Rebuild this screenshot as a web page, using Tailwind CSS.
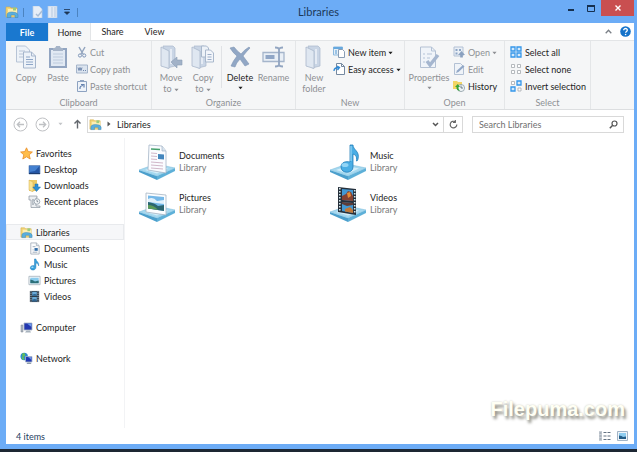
<!DOCTYPE html>
<html lang="en">
<head>
  <meta charset="UTF-8">
  <meta name="viewport" content="width=device-width, initial-scale=1">
  <title>Libraries</title>
  <script src="https://cdn.jsdelivr.net/npm/@tailwindcss/browser@4"></script>
</head>
<body class="min-h-screen flex flex-col bg-[#6cacf6] border-b-[3px] border-[#1d2733] font-[Lato,'Open_Sans',sans-serif] text-[9px] leading-[11px] text-[#1e1e1e]">

  <!-- shared icons -->
  <svg class="hidden">
    <symbol id="libraries" viewBox="0 0 14 14">
      <path d="M1 2h4l1 1h6v9H1z" fill="#f3d578" stroke="#d3ac48" stroke-width=".6"/>
      <path d="M3 4h9v4H3z" fill="#fbeeb4"/><path d="M8 2.500h3v3H8z" fill="#9ccb7c"/>
      <path d="M2 12.500V10q0-3 5-3t6 2.500v3h-3V10H6v2.500z" fill="#59aede" stroke="#3a86b8" stroke-width=".5"/>
    </symbol>
    <symbol id="document" viewBox="0 0 14 14">
      <path d="M3 1h6l3 3v9H3z" fill="#fbfcfd" stroke="#98a3af" stroke-width=".8"/>
      <path d="M9 1v3h3" fill="#dde4ea" stroke="#98a3af" stroke-width=".7"/>
      <path d="M5 5h3M5 11h5M5 8.500h1" stroke="#8696a8" stroke-width=".8"/><path d="M7 6.500h3.500v3H7z" fill="#356fa9"/>
    </symbol>
    <symbol id="music" viewBox="0 0 14 14">
      <path d="M7 1h1.500c0 2.500 4 3.500 3 7.500-.3-2-1.500-2.800-3-3V10c0 4-6 3.800-6 .7C2.500 8.500 5 7.700 7 8.500z" fill="#38a1dd" stroke="#1d78b5" stroke-width=".5"/>
      <ellipse cx="4.700" cy="10" rx="1.300" ry=".8" fill="#a4dcf7"/>
    </symbol>
    <symbol id="picture" viewBox="0 0 14 14">
      <path d="M1 2.500h12v9H1z" fill="#f5f8fa" stroke="#9eabb6" stroke-width=".8"/>
      <path d="M2.500 4h9v6h-9z" fill="#8acbed"/><path d="M2.500 6q3 .5 5 2l4-1v3h-9z" fill="#2b6f78"/>
    </symbol>
    <symbol id="video" viewBox="0 0 14 14">
      <path d="M2 1h10v12H2z" fill="#2d3b49"/><path d="M4.500 2h5v4.300h-5zM4.500 7.500h5V12h-5z" fill="#69a9d6"/>
      <path d="M4.500 5q3-1.500 5 0v1.300h-5zM4.500 10.500q3-1.500 5 0V12h-5z" fill="#31648f"/>
      <path d="M3.200 1.500v12M10.800 1.500v12" stroke="#d7dfe6" stroke-dasharray="1 1"/>
    </symbol>
    <symbol id="tray" viewBox="0 0 36 36">
      <path d="M0 26l18 6v4L0 28z" fill="#4b9fcc"/><path d="M18 32l18-8v3l-18 9z" fill="#5eb0d8"/>
      <path d="M0 26l17-6 19 4-18 8z" fill="#a5d8ef" stroke="#74b8da" stroke-width=".5"/>
      <path d="M6 26l11-4 12 2.500-11 5z" fill="#d3eefa"/>
    </symbol>
    <symbol id="folder" viewBox="0 0 24 24">
      <path d="M6 1h10l2 2v18l-8 2z" fill="#c9d5e5" stroke="#a9b8cc" stroke-width=".7"/>
      <path d="M4 2l8 4v17.500L4 21z" fill="#dfe7f1" stroke="#a9b8cc" stroke-width=".8"/>
      <path d="M14 4v15" stroke="#eef2f8" stroke-width="1.500"/>
    </symbol>
    <symbol id="down" viewBox="0 0 6 4"><path d="M.5.500h5L3 3.500z" fill="currentColor"/></symbol>
  </svg>

  <header class="h-[23px] grid grid-cols-[1fr_auto_1fr] items-start">
    <div class="h-full flex items-center pl-[5px] pt-px">
      <svg class="size-[14px]"><use href="#libraries"/></svg>
      <span class="w-px h-[9px] bg-[#4b83c0] ml-1"></span>
      <button aria-label="Properties" class="ml-[7px]"><svg class="w-3 h-3" viewBox="0 0 12 12"><path d="M2 0h6l3 3v9H2z" fill="#e7eef7" stroke="#b8cce3" stroke-width=".7"/><path d="M5 8l2 2 4-5" fill="none" stroke="#a8bdd6" stroke-width="1.500"/></svg></button>
      <button aria-label="New folder" class="ml-1"><svg class="w-3 h-3" viewBox="0 0 12 12"><path d="M1 0h9v12H1z" fill="#e2eaf5" stroke="#b8cce3" stroke-width=".7"/><path d="M5 1v10M8 1v10" stroke="#b7c9df"/></svg></button>
      <button aria-label="Customize Quick Access Toolbar" class="ml-1"><svg class="w-2 h-2" viewBox="0 0 8 8"><path d="M1 1.500h6M1.500 4h5L4 6.500z" stroke="#1d3450" fill="#1d3450" stroke-width=".8"/></svg></button>
      <span class="w-px h-[9px] bg-[#4b83c0] ml-[6px]"></span>
    </div>
    <h1 class="text-[11px] leading-[23px] text-[#1c3858]">Libraries</h1>
    <div class="flex justify-end pr-[3px] text-[#16304f]">
      <button aria-label="Minimize" class="w-5 h-[15px] flex justify-center items-center"><svg class="w-[6px] h-[6px]" viewBox="0 0 6 6"><path d="M0 4h6v2H0z" fill="currentColor"/></svg></button>
      <button aria-label="Maximize" class="w-5 h-[15px] flex justify-center items-center pt-px"><svg class="w-2 h-[7px]" viewBox="0 0 8 7"><path d="M.5 1h7v5.500h-7z" fill="none" stroke="currentColor"/><path d="M0 0h8v2H0z" fill="currentColor"/></svg></button>
      <button aria-label="Close" class="w-[33px] h-4 bg-[#c94f50] flex justify-center items-center"><svg class="size-[6px]" viewBox="0 0 6 6"><path d="M.5.500l5 5M5.500.500l-5 5" stroke="#fff" stroke-width="1.400"/></svg></button>
    </div>
  </header>

  <div class="flex-1 flex flex-col mr-[3px] ml-[6px] mb-[5px] bg-white relative">
    <nav class="flex h-[18px] bg-white border-b border-[#e3e5e7] shrink-0">
      <button class="w-[42px] bg-[#1a78cf] text-white font-bold -mb-px">File</button>
      <button class="w-[43px] bg-[#f5f6f7] border-x border-[#e3e5e7] -mb-px">Home</button>
      <button class="w-[43px]">Share</button>
      <button class="w-[41px]">View</button>
      <span class="flex-1"></span>
      <button aria-label="Minimize the Ribbon" class="px-1"><svg class="w-[7px] h-[5px]" viewBox="0 0 7 5"><path d="M.7 4.200L3.500 1.200l2.800 3" fill="none" stroke="#7b8087" stroke-width="1.300"/></svg></button>
      <button aria-label="Help" class="pl-1 pr-[3px]"><svg class="size-[11px]" viewBox="0 0 11 11"><circle cx="5.500" cy="5.500" r="5.300" fill="#1673ca"/><path d="M3.700 4.300C3.700 1.800 7.500 2 7.300 4.200c-.1 1.300-1.700 1.200-1.700 2.600" fill="none" stroke="#fff" stroke-width="1.300"/><circle cx="5.600" cy="8.500" r=".8" fill="#fff"/></svg></button>
    </nav>

    <!-- ribbon -->
    <div class="flex h-[69px] shrink-0 bg-[#f5f6f7] border-b border-[#dcdee0] text-[#8e9094]">
      <section class="w-[146px] shrink-0 border-r border-[#e4e6e8] flex flex-col">
        <div class="flex flex-1 pl-1 pt-[3px]">
          <button class="w-8 flex flex-col items-center gap-[3px] pt-px">
            <svg class="size-6" viewBox="0 0 24 24"><path d="M2.500 1h9l4 4v12h-13z" fill="#edf2f8" stroke="#b7c4d6"/><path d="M5 6h6M5 9h5M5 12h5" stroke="#b7c4d6"/><path d="M9.500 7h8l4 4v12h-12z" fill="#edf2f8" stroke="#a6b6cc"/><path d="M17.500 7v4h4" fill="none" stroke="#a6b6cc"/><path d="M12 12h4M12 14.500h7M12 17h7M12 19.500h7" stroke="#8ea6c7"/></svg>
            Copy
          </button>
          <button class="w-8 flex flex-col items-center gap-[3px] pt-px">
            <svg class="size-6" viewBox="0 0 24 24"><path d="M3 3h18v20H3z" fill="#92a5c1"/><path d="M5 5h14v16H5z" fill="#e1e9f3"/><path d="M7 3q3 0 3-2h4q0 2 3 2v3H7z" fill="#a6b4c8"/><path d="M7 9h10M7 12h10M7 15h10M7 18h10" stroke="#bdcbdd"/></svg>
            Paste
          </button>
          <div class="flex flex-col gap-px pl-[2px]">
            <button class="h-4 flex items-center gap-[2px]"><svg class="size-3" viewBox="0 0 12 12"><path d="M3 1l4 7M9 1L5 8" stroke="#93a5bf" stroke-width="1.500"/><circle cx="4" cy="9.500" r="1.600" fill="none" stroke="#7e96b9"/><circle cx="8.200" cy="9.500" r="1.600" fill="none" stroke="#7e96b9"/></svg>Cut</button>
            <button class="h-4 flex items-center gap-[2px]"><svg class="size-3" viewBox="0 0 12 12"><path d="M.5 2h11v8H.5z" fill="#dbe4ef" stroke="#a4b4ca"/><path d="M2 4.500l1 3 1-3 1 3 1-3M7 7.500h1M9 7.500h1" fill="none" stroke="#6e86ac"/></svg>Copy path</button>
            <button class="h-4 flex items-center gap-[2px]"><svg class="size-3" viewBox="0 0 12 12"><path d="M1.500 1.500h9v10h-9z" fill="#eef3f9" stroke="#8da2c1"/><path d="M4 0h4v2H4z" fill="#8da2c1"/><path d="M4 9q-.5-3 3-3.500M5 4.500h3v3" fill="none" stroke="#6481ae" stroke-width="1.200"/></svg>Paste shortcut</button>
          </div>
        </div>
        <h2 class="h-3 text-center">Clipboard</h2>
      </section>

      <section class="w-[144px] shrink-0 border-r border-[#e4e6e8] flex flex-col">
        <div class="flex flex-1 pl-[3px] pt-[3px]">
          <button class="w-8 flex flex-col items-center gap-[3px] pt-px">
            <svg class="size-6" viewBox="0 0 24 24"><use href="#folder" x="-2"/><path d="M12 17l6-5v3h5v5h-5v3z" fill="#a2b2c8" stroke="#8c9eb7" stroke-width=".6"/></svg>
            <span>Move<br>to <svg class="inline w-[5px] h-1"><use href="#down"/></svg></span>
          </button>
          <button class="w-8 flex flex-col items-center gap-[3px] pt-px">
            <svg class="size-6" viewBox="0 0 24 24"><use href="#folder" x="-3"/><path d="M10.500 1h5l2 2v9h-7z" fill="#edf2f8" stroke="#a9b8cc"/><path d="M14.500 5h5l3 3v9h-8z" fill="#f2f5fa" stroke="#a9b8cc"/><path d="M16.500 9.500h4M16.500 12h4M16.500 14.500h4" stroke="#9caec8"/></svg>
            <span>Copy<br>to <svg class="inline w-[5px] h-1"><use href="#down"/></svg></span>
          </button>
          <span class="w-px h-[42px] bg-[#e0e2e5] mx-[2px] mt-[2px]"></span>
          <button class="w-8 flex flex-col items-center gap-[3px] pt-px text-[#1e1e1e]">
            <svg class="size-6" viewBox="0 0 24 24"><path d="M2 3l4-1q3 4 7 7 3-4 8-7l1 1q-4 4-7 8 3 4 6 8l-4 2q-3-4-5-7-4 4-5 8l-4-1q2-5 6-10-4-3-7-8z" fill="#91a7c5" stroke="#7f95b4" stroke-width=".6"/></svg>
            <span>Delete</span><svg class="w-[5px] h-1"><use href="#down"/></svg>
          </button>
          <button class="w-[35px] flex flex-col items-center gap-[3px] pt-px">
            <svg class="size-6" viewBox="0 0 24 24"><path d="M1 7.500h21v9H1z" fill="#e9eff6" stroke="#a5b5cb" stroke-width="1.300"/><path d="M3.500 10h9v4h-9z" fill="#90a6c6"/><path d="M13 2.500q4 0 4 2 0-2 4-2M17 4v16M13 21.500q4 0 4-2 0 2 4 2" fill="none" stroke="#92a5c1" stroke-width="1.800"/></svg>
            Rename
          </button>
        </div>
        <h2 class="h-3 text-center">Organize</h2>
      </section>

      <section class="w-[109px] shrink-0 border-r border-[#e4e6e8] flex flex-col">
        <div class="flex flex-1 pl-[2px] pt-[3px]">
          <button class="w-8 flex flex-col items-center gap-[3px] pt-px">
            <svg class="size-6"><use href="#folder"/></svg>
            <span>New<br>folder</span>
          </button>
          <div class="flex flex-col gap-px pl-[3px] text-[#1e1e1e]">
            <button class="h-4 flex items-center gap-[3px]"><svg class="size-3" viewBox="0 0 12 12"><path d="M.5 1h9v8h-9z" fill="#e4eff9" stroke="#8cb9df"/><path d="M.5 1h9v2h-9z" fill="#66a9df"/><path d="M2 4h2v4H2z" fill="#9bc3e4"/><path d="M5.500 3.500h4l2 2v6h-6z" fill="#fff" stroke="#899db4"/></svg><span>New item <svg class="inline w-[5px] h-1"><use href="#down"/></svg></span></button>
            <button class="h-4 flex items-center gap-[3px]"><svg class="size-3" viewBox="0 0 12 12"><path d="M3.500.500h5l3 3v8h-8z" fill="#fff" stroke="#7589a0"/><path d="M8.500.500v3h3" fill="none" stroke="#7589a0"/><path d="M1 8q0-3.500 5-3.500M4 3l2.500 1.500L4.500 7" fill="none" stroke="#2e88d4" stroke-width="1.300"/></svg><span>Easy access <svg class="inline w-[5px] h-1"><use href="#down"/></svg></span></button>
          </div>
        </div>
        <h2 class="h-3 text-center">New</h2>
      </section>

      <section class="w-[100px] shrink-0 border-r border-[#e4e6e8] flex flex-col">
        <div class="flex flex-1 pl-1 pt-[3px]">
          <button class="w-10 flex flex-col items-center gap-[3px] pt-px">
            <svg class="size-6" viewBox="0 0 24 24"><path d="M3.500 2h11l4 4v16.500h-15z" fill="#f0f4f9" stroke="#b4c1d3"/><path d="M14.500 2v4h4M6 9h2M6 13h2M6 17h2M10 9h5M10 13h3" fill="none" stroke="#b4c3d7"/><path d="M10 16l3 4 8-10" fill="none" stroke="#a5b6cf" stroke-width="3.500"/></svg>
            <span>Properties</span><svg class="w-[5px] h-1"><use href="#down"/></svg>
          </button>
          <div class="flex flex-col gap-px pl-1">
            <button class="h-4 flex items-center gap-[3px]"><svg class="size-3" viewBox="0 0 12 12"><path d="M1 1h9v9H1z" fill="#e9eff6" stroke="#b3c1d4"/><path d="M2.500 3h2v2h-2zM6 3h2v2H6zM2.500 6.500h2v2h-2z" fill="#8da5c5"/><path d="M8.500 5L12 9H9.800v2.500H7.200V9H5z" fill="#8aa0bf"/></svg><span>Open <svg class="inline w-[5px] h-1"><use href="#down"/></svg></span></button>
            <button class="h-4 flex items-center gap-[3px]"><svg class="size-3" viewBox="0 0 12 12"><path d="M1.500.500h6l3 3v8h-9z" fill="#eff3f8" stroke="#b3c1d4"/><path d="M3 10l1-2.500L10 2l1.500 1.500L5.500 9z" fill="#91a7c7"/></svg>Edit</button>
            <button class="h-4 flex items-center gap-[3px] text-[#1e1e1e]"><svg class="size-3" viewBox="0 0 12 12"><path d="M0 1h4l1 1h4v7H0z" fill="#f2d565"/><circle cx="8" cy="8" r="3.600" fill="#eef3f5" stroke="#80909a" stroke-width=".7"/><path d="M8 5.500V8h2" fill="none" stroke="#52636d" stroke-width=".8"/><path d="M7 11Q3 10.500 3.500 7H2l2.800-3L7 7H5.500Q5 9.500 7 11z" fill="#37a43a"/></svg>History</button>
          </div>
        </div>
        <h2 class="h-3 text-center">Open</h2>
      </section>

      <section class="w-[86px] shrink-0 border-r border-[#e4e6e8] flex flex-col">
        <div class="flex flex-col flex-1 gap-px pl-[5px] pt-[3px] text-[#1e1e1e]">
          <button class="h-4 flex items-center gap-[3px]"><svg class="size-3" viewBox="0 0 12 12" fill="#d3e9fc" stroke="#3597ea" stroke-width="1.300"><path d="M1 1h4v4H1zM7 1h4v4H7zM1 7h4v4H1zM7 7h4v4H7z"/></svg>Select all</button>
          <button class="h-4 flex items-center gap-[3px]"><svg class="size-3" viewBox="0 0 12 12" fill="#fff" stroke="#a4a9af" stroke-width=".8"><path d="M1.500 1.500h3v3h-3zM7.500 1.500h3v3h-3zM1.500 7.500h3v3h-3zM7.500 7.500h3v3h-3z"/></svg>Select none</button>
          <button class="h-4 flex items-center gap-[3px]"><svg class="size-3" viewBox="0 0 12 12" fill="#fff"><path d="M1.500 1.500h3v3h-3zM8 8h3v3H8z" stroke="#a4a9af" stroke-width=".8"/><path d="M7 1h4v4H7zM1 7h4v4H1z" fill="#d3e9fc" stroke="#3597ea" stroke-width="1.300"/></svg>Invert selection</button>
        </div>
        <h2 class="h-3 text-center">Select</h2>
      </section>
    </div>

    <!-- address bar -->
    <div class="flex items-center h-7 shrink-0 pl-[7px] pr-[10px] text-[#777]">
      <button aria-label="Back"><svg class="size-[15px]" viewBox="0 0 15 15" fill="none" stroke="#bfc1c4"><circle cx="7.500" cy="7.500" r="6.500"/><path d="M11 7.500H4.500M7 4.800L4.300 7.500 7 10.200" stroke-width="1.300"/></svg></button>
      <button aria-label="Forward" class="ml-[7px]"><svg class="size-[15px]" viewBox="0 0 15 15" fill="none" stroke="#bfc1c4"><circle cx="7.500" cy="7.500" r="6.500"/><path d="M4 7.500h6.500M8 4.800l2.700 2.700L8 10.200" stroke-width="1.300"/></svg></button>
      <button aria-label="Recent locations" class="ml-2 text-[#c3c5c8]"><svg class="w-[5px] h-1"><use href="#down"/></svg></button>
      <button aria-label="Up" class="ml-[10px]"><svg class="w-[9px] h-[10px]" viewBox="0 0 9 10"><path d="M4.500 9.500V1.500M1.500 4.500l3-3 3 3" fill="none" stroke="#63676d" stroke-width="1.400"/></svg></button>
      <div class="flex flex-1 items-center h-[17px] border border-[#d9d9d9] ml-[5px] text-[#1e1e1e]">
        <svg class="size-[13px] ml-px"><use href="#libraries"/></svg>
        <svg class="w-1 h-[6px] ml-[5px]" viewBox="0 0 4 6"><path d="M.5.500L3.500 3 .5 5.500z" fill="#555"/></svg>
        <a href="#" class="ml-[6px] flex-1">Libraries</a>
        <button aria-label="Previous locations" class="px-[2px]"><svg class="w-[7px] h-[5px]" viewBox="0 0 7 5"><path d="M1 1l2.500 2.500L6 1" fill="none" stroke="#555" stroke-width="1.500"/></svg></button>
        <button aria-label="Refresh" class="w-[19px] h-full border-l border-[#d9d9d9] flex items-center justify-center ml-[2px]"><svg class="size-[9px]" viewBox="0 0 9 9"><path d="M6.300 1.800A3.300 3.300 0 1 0 7.800 4.500M6.300 0v2.500H4" fill="none" stroke="#666" stroke-width="1.200"/></svg></button>
      </div>
      <div class="flex items-center w-[152px] h-[17px] border border-[#d9d9d9] ml-[9px] pl-[6px] pr-[5px]">
        <input type="text" aria-label="Search Libraries" placeholder="Search Libraries" class="flex-1 min-w-0 outline-none placeholder:text-[#6f6f6f]">
        <svg class="size-[9px]" viewBox="0 0 9 9"><circle cx="5.500" cy="3.500" r="2.500" fill="none" stroke="#555" stroke-width="1.200"/><path d="M3.700 5.300L.8 8.200" stroke="#555" stroke-width="1.500"/></svg>
      </div>
    </div>

    <div class="flex flex-1">
      <aside class="w-[119px] shrink-0 border-r border-[#f2f3f5] pt-[7px] flex flex-col gap-[15px]">
        <ul>
          <li><a href="#" class="h-4 flex items-center gap-[3px] pl-[14px]"><svg class="size-[13px]" viewBox="0 0 13 13"><path d="M6.500.800l1.700 3.800 4.200.4-3.200 2.800 1 4.200-3.700-2.200-3.700 2.200 1-4.200L.6 5l4.200-.4z" fill="#ffbd4a" stroke="#e88b26" stroke-width=".8"/></svg>Favorites</a></li>
          <li><a href="#" class="h-4 flex items-center gap-[3px] pl-[22px]"><svg class="size-[13px]" viewBox="0 0 13 13"><path d="M1 2.500h11v8.500H1z" fill="#2456a5" stroke="#6b8dbb" stroke-width=".7"/><path d="M1.500 3h10L7 8 1.500 9z" fill="#4380d0"/><path d="M1 10.500h11" stroke="#1b3c70"/></svg>Desktop</a></li>
          <li><a href="#" class="h-4 flex items-center gap-[3px] pl-[22px]"><svg class="size-[13px]" viewBox="0 0 13 13"><path d="M1 1h8v11H1z" fill="#edca65"/><path d="M1 1l4 2v10l-4-2z" fill="#f9e394" stroke="#d4ad49" stroke-width=".5"/><path d="M7 5h3v3h2.500L8.500 12.500 4.800 8H7z" fill="#2c8fd6" stroke="#1a6cac" stroke-width=".5"/></svg>Downloads</a></li>
          <li><a href="#" class="h-4 flex items-center gap-[3px] pl-[22px]"><svg class="size-[13px]" viewBox="0 0 13 13"><path d="M1 1h8v2h-1v8h4v1.500H3V5H1z" fill="#eceff2" stroke="#89949f" stroke-width=".7"/><circle cx="9" cy="6.500" r="2.800" fill="#f5f7f9" stroke="#8d99a4" stroke-width=".8"/><path d="M9 5v1.700h1.200M4 5h2M4 7h1.500M4 9h2" fill="none" stroke="#697683" stroke-width=".8"/></svg>Recent places</a></li>
        </ul>
        <ul>
          <li><a href="#" class="h-4 flex items-center gap-[3px] pl-[13px] bg-[#f6f7f9] border border-[#e8eaed]"><svg class="size-[13px]"><use href="#libraries"/></svg>Libraries</a></li>
          <li><a href="#" class="h-4 flex items-center gap-[3px] pl-[22px]"><svg class="size-[13px]"><use href="#document"/></svg>Documents</a></li>
          <li><a href="#" class="h-4 flex items-center gap-[3px] pl-[22px]"><svg class="size-[13px]"><use href="#music"/></svg>Music</a></li>
          <li><a href="#" class="h-4 flex items-center gap-[3px] pl-[22px]"><svg class="size-[13px]"><use href="#picture"/></svg>Pictures</a></li>
          <li><a href="#" class="h-4 flex items-center gap-[3px] pl-[22px]"><svg class="size-[13px]"><use href="#video"/></svg>Videos</a></li>
        </ul>
        <a href="#" class="h-4 flex items-center gap-[3px] pl-[14px]"><svg class="size-[13px]" viewBox="0 0 13 13"><path d="M1 4h2v7H1z" fill="#aeb8c2" stroke="#7c8792" stroke-width=".5"/><path d="M4 2h8v7H4z" fill="#2338b0" stroke="#aab5c4" stroke-width=".8"/><path d="M7 2.500h4.500V6z" fill="#6f9ae8"/><path d="M5 11.500h6l-1-2H6.500z" fill="#a8b3be"/></svg>Computer</a>
        <a href="#" class="h-4 flex items-center gap-[3px] pl-[14px]"><svg class="size-[13px]" viewBox="0 0 13 13"><circle cx="4.200" cy="4.500" r="3.700" fill="#2b8bce"/><path d="M2 2q2-2 3 0T3 5q2 1 1 3-3-1-2-3T2 2z" fill="#63bd58"/><path d="M5.500 4.500h6.500v5.500H5.500z" fill="#1f37b4" stroke="#a9b6c8" stroke-width=".8"/><path d="M8 5h3.500v3z" fill="#698ee2"/><path d="M6.500 12h5l-1-1.500h-3z" fill="#8f9dab"/></svg>Network</a>
      </aside>

      <main class="flex-1 grid grid-cols-[repeat(2,191px)] auto-rows-[42px] content-start pl-[14px] pt-[3px]">
        <a href="#" class="flex items-center gap-1">
          <svg class="size-9" viewBox="0 0 36 36"><use href="#tray"/><path d="M10 1l13 1 4 5v22L9 26z" fill="#fafcff" stroke="#a4b5c7" stroke-width=".8"/><path d="M23 2v5h4" fill="#d9e4ee" stroke="#a4b5c7" stroke-width=".7"/><path d="M12 5l9 .5" stroke="#45a06c" stroke-width="1.300"/><path d="M12 9l6 .5M12 12l6 .5M12 15l6 .5M12 18l12 1M12 21l12 1M12 24l12 1" stroke="#c5a4ba" stroke-width=".8"/><path d="M19 10l6 .5v5l-6-.5z" fill="#4386bd"/></svg>
          <span class="leading-3">Documents<br><span class="text-[#7a7a7a]">Library</span></span>
        </a>
        <a href="#" class="flex items-center gap-1">
          <svg class="size-9" viewBox="0 0 36 36"><use href="#tray"/><path d="M20 1h3c0 5 7 6 5 14-.5 2-1 2-1.500 2 .5-5-1-6-3.500-7v13c0 7-12 7-12 0 0-5 5-6 9-5z" fill="#4aaee5" stroke="#237fb9" stroke-width=".8"/><path d="M21 2v15" stroke="#a6def9"/><ellipse cx="15" cy="21" rx="3.500" ry="2" fill="#93d5f6"/></svg>
          <span class="leading-3">Music<br><span class="text-[#7a7a7a]">Library</span></span>
        </a>
        <a href="#" class="flex items-center gap-1">
          <svg class="size-9" viewBox="0 0 36 36"><use href="#tray"/><path d="M7 7l20 2v20L7 26z" fill="#fbfdff" stroke="#a5b4c3" stroke-width=".8"/><path d="M9 9.500l16 1.500v14L9 22.500z" fill="#75b8e8"/><path d="M9 13q5-3 9 2l7-1v4l-16-2z" fill="#e1f1fb"/><path d="M9 16q7 1 10 4l6-1v6L9 22.500z" fill="#2c6670"/><path d="M9 19q6 0 10 4.800L9 22.500z" fill="#5b9b58"/></svg>
          <span class="leading-3">Pictures<br><span class="text-[#7a7a7a]">Library</span></span>
        </a>
        <a href="#" class="flex items-center gap-1">
          <svg class="size-9" viewBox="0 0 36 36"><use href="#tray"/><path d="M8 1l18 2v26L8 26z" fill="#26303b"/><path d="M12 3l11 1v11l-11-1zM12 16l11 1v10l-11-2z" fill="#4298d4"/><path d="M12 10l4-2 2-3 3 1 2 4v5l-11-1z" fill="#874232"/><path d="M17 7l3-1 1 4-3 2z" fill="#e78d35"/><path d="M12 16l11 1v2l-6 1-5-2z" fill="#5e3c37"/><path d="M15 23l5-2 3 3v3l-8-1.500z" fill="#c07939"/><path d="M9.800 2v24M24.700 4v24" stroke="#d5e7ec" stroke-width="1.600" stroke-dasharray="1.500 1.500"/></svg>
          <span class="leading-3">Videos<br><span class="text-[#7a7a7a]">Library</span></span>
        </a>
      </main>
    </div>

    <footer class="flex items-center h-4 shrink-0 pl-[10px] pr-[6px] text-[#26405f]">
      <span class="flex-1">4 items</span>
      <button aria-label="Details view"><svg class="w-3 h-[10px]" viewBox="0 0 12 10"><path d="M0 0h3v10H0z" fill="#c8ced5"/><path d="M.5 2h2M.5 5h2M.5 8h2" stroke="#8d98a4"/><path d="M4.500 1.500H12M4.500 5H12M4.500 8.500H12" stroke="#637181" stroke-dasharray="3 1"/></svg></button>
      <button aria-label="Large icons view" class="ml-[6px]"><svg class="w-[11px] h-[10px]" viewBox="0 0 11 10"><path d="M.5.500h10v9H.5z" fill="#eef4f9" stroke="#a2b4c6"/><path d="M2 2h7v6H2z" fill="#8fcdf0"/><path d="M2 4.500q3 0 4 1.500l3-.5V8H2z" fill="#235c86"/></svg></button>
    </footer>

    <p class="absolute right-[9px] bottom-[23px] text-[20px] leading-6 font-bold font-['Liberation_Sans',sans-serif] text-[#fffff4] [text-shadow:2px_3px_3px_#8d8d84,0_0_2px_#c9c9bd]">Filepuma.com</p>
  </div>

</body>
</html>
